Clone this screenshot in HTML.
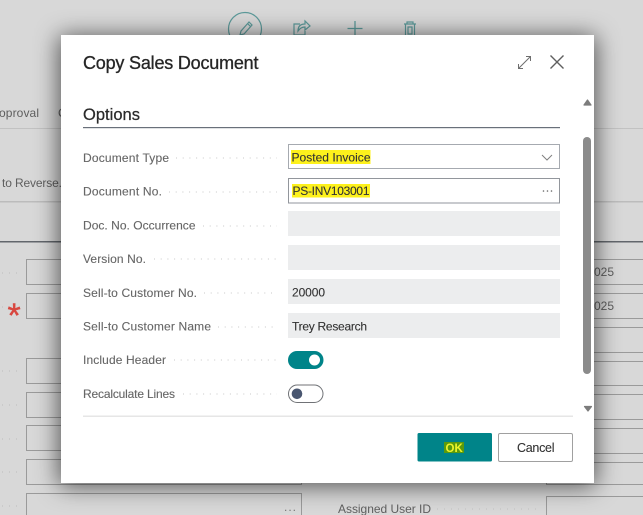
<!DOCTYPE html>
<html>
<head>
<meta charset="utf-8">
<style>
html,body{margin:0;padding:0;width:643px;height:515px;overflow:hidden;background:#d6d6d6}
svg{display:block;font-family:"Liberation Sans",sans-serif}
</style>
</head>
<body>
<svg width="643" height="515" viewBox="0 0 643 515" xmlns="http://www.w3.org/2000/svg">
<defs>
<filter id="sh" x="-20%" y="-20%" width="140%" height="140%"><feGaussianBlur stdDeviation="12"/></filter>
<filter id="b" x="-5%" y="-5%" width="110%" height="110%"><feGaussianBlur stdDeviation="0.35"/></filter>
</defs>
<rect width="643" height="515" fill="#d8d8d8"/>

<!-- background page -->
<g filter="url(#b)">
<circle cx="245" cy="29" r="16.500" fill="none" stroke="#5c9a9a" stroke-width="1.200"/>
<path d="M240 35l1-4 8-9 3 3-8 9z M247.500 23.500l3 3" fill="none" stroke="#5c9a9a" stroke-width="1.200"/>
<path d="M300 24h-6v11h11v-4 M298 31c0-5 3-7 7-7v-3l5 5-5 4v-3c-3 0-5 1-7 4z" fill="none" stroke="#5c9a9a" stroke-width="1.200"/>
<path d="M355 21v15M347.500 28.500h15" fill="none" stroke="#5c9a9a" stroke-width="1.300"/>
<path d="M404 24h12M407 24v-2h6v2M405.500 24v12h9v-12M408 27v7h4v-7z" fill="none" stroke="#5c9a9a" stroke-width="1.200"/>
<rect x="0" y="128" width="643" height="1" fill="#c2c2c2"/>
<rect x="0" y="201" width="643" height="1.500" fill="#bcbcbc"/>
<rect x="0" y="241" width="643" height="1.500" fill="#62666c"/>
<text x="-1" y="117" font-size="12" fill="#5e5e5e" textLength="40" lengthAdjust="spacing">oproval</text>
<text x="58" y="117" font-size="12" fill="#5e5e5e">C</text>
<text x="2" y="187" font-size="12" fill="#5e5e5e" textLength="60" lengthAdjust="spacing">to Reverse.</text>
<text x="7.500" y="327" font-size="34" fill="#d8463f" stroke="#d8463f" stroke-width=".4">*</text>
<g fill="none" stroke="#9a9a9a" stroke-width="1">
<rect x="26.500" y="259.500" width="60" height="25"/>
<rect x="26.500" y="293.500" width="60" height="25"/>
<rect x="26.500" y="358.500" width="60" height="25"/>
<rect x="26.500" y="392.500" width="60" height="25"/>
<rect x="26.500" y="425.500" width="60" height="25"/>
<rect x="26.500" y="459.500" width="275" height="25"/>
<rect x="26.500" y="493.500" width="275" height="30"/>
<rect x="546.500" y="259.500" width="110" height="25"/>
<rect x="546.500" y="293.500" width="110" height="25"/>
<rect x="546.500" y="327.500" width="110" height="25"/>
<rect x="546.500" y="361.500" width="110" height="24"/>
<rect x="546.500" y="394.500" width="110" height="25"/>
<rect x="546.500" y="428.500" width="110" height="25"/>
<rect x="546.500" y="462.500" width="110" height="22"/>
<rect x="546.500" y="496.500" width="110" height="30"/>
</g>
<text x="594" y="276" font-size="12" fill="#5e5e5e" textLength="20" lengthAdjust="spacing">025</text>
<text x="594" y="310" font-size="12" fill="#5e5e5e" textLength="20" lengthAdjust="spacing">025</text>
<text x="284" y="511" font-size="12" fill="#777" letter-spacing="1">...</text>
<text x="338" y="513" font-size="12" fill="#5e5e5e" textLength="93" lengthAdjust="spacing">Assigned User ID</text>
<path d="M437 509H537" stroke="#c0c0c0" stroke-dasharray="1 6"/>
<g stroke="#bcbcbc" stroke-dasharray="1 6">
<path d="M2 273H20M2 307H6M2 371H20M2 405H20M2 439H20M2 472H20M2 506H20"/>
</g>
</g>

<!-- dialog shadow -->
<rect x="59" y="36" width="537" height="450" fill="#000" fill-opacity=".62" filter="url(#sh)"/>
<rect x="61" y="35" width="533" height="448" fill="#fff"/>

<g filter="url(#b)">
<!-- title -->
<text x="83" y="69" font-size="18" fill="#262626" stroke="#262626" stroke-width=".3" textLength="175.500" lengthAdjust="spacing">Copy Sales Document</text>
<path d="M518.500 68.500l12-12M526 56.500h4.500v4.500M518.500 64v4.500h4.500" fill="none" stroke="#6e6e6e" stroke-width="1"/>
<path d="M550.500 55.500l13 13M563.500 55.500l-13 13" fill="none" stroke="#5e5e5e" stroke-width="1.400"/>

<!-- section -->
<text x="83" y="120" font-size="16.500" fill="#2b2b2b" stroke="#2b2b2b" stroke-width=".25" textLength="57" lengthAdjust="spacing">Options</text>
<rect x="83" y="127" width="477" height="1.200" fill="#69707a"/>

<!-- scrollbar -->
<path d="M584 105l3.500-5 3.500 5z" fill="#7c7c7c" stroke="#7c7c7c" stroke-width="1.200" stroke-linejoin="round"/>
<rect x="583" y="137" width="8" height="237" rx="4" fill="#8b8b8b"/>
<path d="M584.500 406.500l3.500 4.500 3.500-4.500z" fill="#7c7c7c" stroke="#7c7c7c" stroke-width="1.200" stroke-linejoin="round"/>

<!-- labels -->
<g font-size="12" fill="#666" stroke="#666" stroke-width=".12">
<text x="83" y="162" textLength="86" lengthAdjust="spacing">Document Type</text>
<text x="83" y="195.500" textLength="79" lengthAdjust="spacing">Document No.</text>
<text x="83" y="229.500" textLength="112.500" lengthAdjust="spacing">Doc. No. Occurrence</text>
<text x="83" y="263" textLength="63" lengthAdjust="spacing">Version No.</text>
<text x="83" y="297" textLength="114" lengthAdjust="spacing">Sell-to Customer No.</text>
<text x="83" y="330.500" textLength="128" lengthAdjust="spacing">Sell-to Customer Name</text>
<text x="83" y="364" textLength="83" lengthAdjust="spacing">Include Header</text>
<text x="83" y="398" textLength="92" lengthAdjust="spacing">Recalculate Lines</text>
</g>
<g stroke="#c8c8c8" stroke-width="1" stroke-dasharray="1 5.700">
<path d="M176 158H277M169 192H277M203 226H277M154 259H277M204 293H277M218 327H277M174 360H277M183 394H277"/>
</g>

<!-- fields -->
<rect x="288.500" y="144.500" width="271" height="24" fill="#fff" stroke="#a6aab0"/>
<rect x="288.500" y="178.500" width="271" height="24.500" fill="#fff" stroke="#92969c"/>
<rect x="288" y="211" width="272" height="25" fill="#ecedee"/>
<rect x="288" y="245" width="272" height="25" fill="#ecedee"/>
<rect x="288" y="279" width="272" height="25" fill="#ecedee"/>
<rect x="288" y="313" width="272" height="25" fill="#ecedee"/>

<rect x="291" y="150" width="79.500" height="14" fill="#fdf11e"/>
<rect x="292" y="184" width="78" height="13.500" fill="#fdf11e"/>
<g font-size="12" fill="#333" stroke="#333" stroke-width=".1">
<text x="291.500" y="161.500" textLength="79" lengthAdjust="spacing">Posted Invoice</text>
<text x="292.500" y="195" textLength="77" lengthAdjust="spacing">PS-INV103001</text>
<text x="292" y="296.500" textLength="33" lengthAdjust="spacing">20000</text>
<text x="292" y="330.500" textLength="75" lengthAdjust="spacing">Trey Research</text>
</g>
<path d="M542 155l5 5 5-5" fill="none" stroke="#808080" stroke-width="1"/>
<g fill="#666"><circle cx="543.500" cy="191" r=".8"/><circle cx="547.500" cy="191" r=".8"/><circle cx="551.500" cy="191" r=".8"/></g>

<!-- toggles -->
<rect x="288" y="351" width="35.500" height="18" rx="9" fill="#008489"/>
<circle cx="314.500" cy="360" r="5.500" fill="#fff"/>
<rect x="288.500" y="385" width="34.500" height="17.500" rx="8.750" fill="#fff" stroke="#6f7276" stroke-width="1"/>
<circle cx="297" cy="393.800" r="5.300" fill="#4a5670"/>

<!-- footer -->
<rect x="83" y="415.500" width="490" height="1.500" fill="#e6e6e6"/>
<rect x="417.500" y="433" width="74.500" height="28.500" rx="1.500" fill="#008489"/>
<rect x="444" y="442" width="20" height="11" fill="#5a9a10"/>
<text x="445.500" y="452" font-size="11.500" font-weight="bold" fill="#eef52a">OK</text>
<rect x="498.500" y="433.500" width="74" height="28" rx="1.500" fill="#fff" stroke="#a0a0a0"/>
<text x="517" y="452" font-size="12.500" fill="#333" stroke="#333" stroke-width=".1" textLength="37.500" lengthAdjust="spacing">Cancel</text>
</g>
</svg>
</body>
</html>
